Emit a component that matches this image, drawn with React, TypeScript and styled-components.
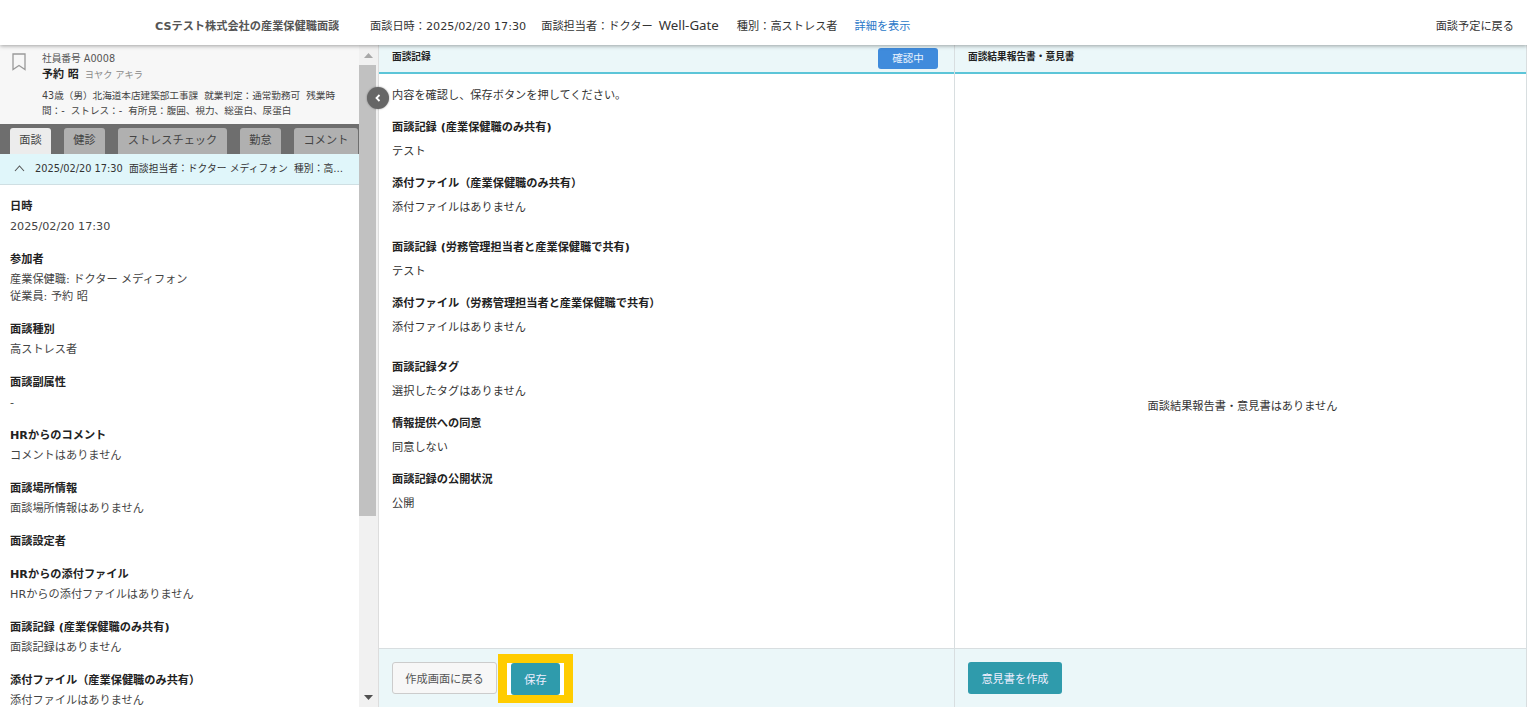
import styled, { createGlobalStyle } from "styled-components";

const GlobalStyle = createGlobalStyle`
  html, body {
    margin: 0;
    height: 100%;
    overflow: hidden;
    background: #fff;
    font-family: "DejaVu Sans", "Noto Sans CJK JP", sans-serif;
    font-size: 11.2px;
    color: #333;
  }
  #root { height: 100%; }
  * { box-sizing: border-box; }
`;

const Page = styled.div`
  display: flex;
  flex-direction: column;
  height: 707px;
  width: 1527px;
  overflow: hidden;
`;

const TopBar = styled.header`
  height: 45px;
  flex: none;
  display: flex;
  align-items: center;
  padding: 4px 13px 0 155px;
  background: #fff;
  box-shadow: 0 1px 4px rgba(0, 0, 0, 0.35);
  position: relative;
  z-index: 2;
`;

const CompanyTitle = styled.div`
  font-weight: 700;
  color: #555;
  width: 215px;
  white-space: nowrap;
`;

const TopInfo = styled.span<{ $gap?: number }>`
  margin-right: ${(p) => p.$gap ?? 15}px;
  color: #333;
  white-space: nowrap;
`;

const BrandName = styled.span`
  font-family: "Noto Sans", sans-serif;
  font-size: 13.3px;
  margin-left: 6px;
`;

const TopLink = styled.a`
  color: #2a78c8;
  white-space: nowrap;
`;

const BackLink = styled.a`
  margin-left: auto;
  color: #333;
  white-space: nowrap;
`;

const Body = styled.div`
  flex: 1;
  min-height: 0;
  display: flex;
  position: relative;
`;

const LeftPanel = styled.aside`
  width: 359px;
  flex: none;
  display: flex;
  flex-direction: column;
  overflow: hidden;
`;

const Profile = styled.section`
  height: 79px;
  flex: none;
  background: #f7f7f7;
  display: flex;
  padding: 7px 22px 0 12px;
`;

const BookmarkSlot = styled.div`
  width: 30px;
  flex: none;
  padding-top: 1px;
  color: #9a9a9a;
`;

const ProfileText = styled.div`
  flex: 1;
  min-width: 0;
`;

const EmployeeNo = styled.div`
  font-size: 9.7px;
  line-height: 14px;
  color: #555;
`;

const NameRow = styled.div`
  display: flex;
  align-items: baseline;
  gap: 6px;
  height: 18px;
  line-height: 18px;
  margin-bottom: 4px;
`;

const Name = styled.span`
  font-size: 11px;
  font-weight: 700;
  color: #222;
`;

const Kana = styled.span`
  font-size: 9.2px;
  color: #888;
`;

const ProfileMeta = styled.div`
  font-size: 9.6px;
  line-height: 15px;
  color: #444;
`;

const TabBand = styled.nav`
  height: 30px;
  flex: none;
  background: #6e6e6e;
  display: flex;
  align-items: flex-end;
  gap: 13px;
  padding-left: 10px;
`;

const Tab = styled.div<{ $active?: boolean; $width: number }>`
  width: ${(p) => p.$width}px;
  height: 26px;
  border-radius: 3px 3px 0 0;
  background: ${(p) => (p.$active ? "#ececec" : "#b0b0b0")};
  color: #444;
  text-align: center;
  line-height: 26px;
  white-space: nowrap;
`;

const SummaryBar = styled.div`
  height: 31px;
  flex: none;
  display: flex;
  align-items: center;
  gap: 10px;
  padding: 0 12px 2px 14px;
  background: #e0f6fa;
  border-bottom: 1px solid #cfdfe3;
  font-size: 9.8px;
  color: #333;
`;

const SummaryText = styled.span`
  flex: 1;
  min-width: 0;
  overflow: hidden;
  white-space: nowrap;
  text-overflow: ellipsis;
`;

const DetailList = styled.div`
  flex: 1;
  min-height: 0;
  overflow: hidden;
  padding: 13px 10px 0;
`;

const DetailItem = styled.div`
  margin-bottom: 16px;
`;

const Label = styled.div`
  font-weight: 700;
  color: #222;
  line-height: 17px;
  margin-bottom: 3px;
`;

const Value = styled.div`
  color: #444;
  line-height: 17px;
`;

const Scrollbar = styled.div`
  width: 20px;
  flex: none;
  display: flex;
  flex-direction: column;
  align-items: center;
  background: #f1f1f1;
  border-right: 1px solid #ddd;
`;

const ScrollButton = styled.div`
  height: 20px;
  flex: none;
  width: 100%;
  display: flex;
  align-items: center;
  justify-content: center;
`;

const ScrollThumb = styled.div`
  width: 17px;
  height: 451px;
  flex: none;
  background: #c1c1c1;
  margin-left: -2px;
`;

const ScrollSpacer = styled.div`
  flex: 1;
`;

const CollapseToggle = styled.button`
  position: absolute;
  left: 367px;
  top: 42px;
  width: 22px;
  height: 22px;
  padding: 0;
  border: none;
  border-radius: 50%;
  background: #666;
  box-shadow: 0 0 2px rgba(0, 0, 0, 0.4);
  display: flex;
  align-items: center;
  justify-content: center;
  z-index: 3;
`;

const Column = styled.section<{ $width: number }>`
  width: ${(p) => p.$width}px;
  flex: none;
  display: flex;
  flex-direction: column;
  border-right: 1px solid #d8dee0;
`;

const ColumnHeader = styled.div`
  height: 29px;
  flex: none;
  display: flex;
  justify-content: space-between;
  padding: 3px 16px 0 13px;
  background: #ebf7f9;
  border-bottom: 2px solid #5cc5d8;
`;

const ColumnTitle = styled.div`
  font-size: 9.7px;
  font-weight: 700;
  color: #222;
  line-height: 17px;
`;

const StatusBadge = styled.div`
  width: 60px;
  height: 21px;
  background: #3f8bdc;
  border-radius: 3px;
  color: #e8f2fc;
  font-size: 10.5px;
  line-height: 21px;
  text-align: center;
`;

const RecordBody = styled.div`
  flex: 1;
  min-height: 0;
  padding: 13px;
`;

const Notice = styled.p`
  margin: 0 0 15px;
  line-height: 17px;
  color: #333;
`;

const RecordItem = styled.div<{ $after?: number }>`
  margin-bottom: ${(p) => p.$after ?? 15}px;
`;

const RecordLabel = styled.div`
  font-weight: 700;
  color: #222;
  line-height: 17px;
  margin-bottom: 7px;
`;

const RecordValue = styled.div`
  color: #333;
  line-height: 17px;
`;

const EmptyBody = styled.div`
  flex: 1;
  min-height: 0;
  display: flex;
  align-items: center;
  justify-content: center;
  padding: 87px 0 0 4px;
  color: #333;
`;

const ColumnFooter = styled.div`
  height: 59px;
  flex: none;
  display: flex;
  align-items: center;
  gap: 1px;
  padding: 0 13px;
  background: #ebf7f9;
  border-top: 1px solid #d8dee0;
`;

const GhostButton = styled.button`
  width: 105px;
  height: 32px;
  background: #f7f7f7;
  border: 1px solid #ccc;
  border-radius: 3px;
  color: #555;
  font: inherit;
`;

const PrimaryButton = styled.button<{ $width: number }>`
  width: ${(p) => p.$width}px;
  height: 32px;
  background: #2f9bac;
  border: none;
  border-radius: 3px;
  color: #eef;
  font: inherit;
`;

const Highlight = styled.div`
  display: flex;
  border: solid #ffcc00;
  border-width: 9px 9px 8px;
  padding: 0 4px;
  background: #fff;
`;

const details: { label: string; values: string[] }[] = [
  { label: "日時", values: ["2025/02/20 17:30"] },
  { label: "参加者", values: ["産業保健職: ドクター メディフォン", "従業員: 予約 昭"] },
  { label: "面談種別", values: ["高ストレス者"] },
  { label: "面談副属性", values: ["-"] },
  { label: "HRからのコメント", values: ["コメントはありません"] },
  { label: "面談場所情報", values: ["面談場所情報はありません"] },
  { label: "面談設定者", values: [] },
  { label: "HRからの添付ファイル", values: ["HRからの添付ファイルはありません"] },
  { label: "面談記録 (産業保健職のみ共有)", values: ["面談記録はありません"] },
  { label: "添付ファイル（産業保健職のみ共有）", values: ["添付ファイルはありません"] },
];

const records: { label: string; value: string; after?: number }[] = [
  { label: "面談記録 (産業保健職のみ共有)", value: "テスト" },
  { label: "添付ファイル（産業保健職のみ共有）", value: "添付ファイルはありません", after: 23 },
  { label: "面談記録 (労務管理担当者と産業保健職で共有)", value: "テスト" },
  { label: "添付ファイル（労務管理担当者と産業保健職で共有）", value: "添付ファイルはありません", after: 23 },
  { label: "面談記録タグ", value: "選択したタグはありません" },
  { label: "情報提供への同意", value: "同意しない" },
  { label: "面談記録の公開状況", value: "公開" },
];

const tabs = [
  { name: "面談", width: 41, active: true },
  { name: "健診", width: 41 },
  { name: "ストレスチェック", width: 109 },
  { name: "勤怠", width: 41 },
  { name: "コメント", width: 64 },
];

export default function App() {
  return (
    <Page>
      <GlobalStyle />
      <TopBar>
        <CompanyTitle>CSテスト株式会社の産業保健職面談</CompanyTitle>
        <TopInfo>面談日時：2025/02/20 17:30</TopInfo>
        <TopInfo $gap={18}>
          面談担当者：ドクター<BrandName>Well-Gate</BrandName>
        </TopInfo>
        <TopInfo $gap={17}>種別：高ストレス者</TopInfo>
        <TopLink>詳細を表示</TopLink>
        <BackLink>面談予定に戻る</BackLink>
      </TopBar>
      <Body>
        <LeftPanel>
          <Profile>
            <BookmarkSlot>
              <svg width="14" height="18" viewBox="0 0 14 18" fill="none" stroke="currentColor" strokeWidth="1.3">
                <path d="M1 1h12v15.5l-6-4-6 4z" />
              </svg>
            </BookmarkSlot>
            <ProfileText>
              <EmployeeNo>社員番号 A0008</EmployeeNo>
              <NameRow>
                <Name>予約 昭</Name>
                <Kana>ヨヤク アキラ</Kana>
              </NameRow>
              <ProfileMeta>
                43歳（男）北海道本店建築部工事課&nbsp; 就業判定：通常勤務可&nbsp; 残業時間：-&nbsp; ストレス：-&nbsp; 有所見：腹囲、視力、総蛋白、尿蛋白
              </ProfileMeta>
            </ProfileText>
          </Profile>
          <TabBand>
            {tabs.map((t) => (
              <Tab key={t.name} $active={t.active} $width={t.width}>
                {t.name}
              </Tab>
            ))}
          </TabBand>
          <SummaryBar>
            <svg width="11" height="7" viewBox="0 0 11 7" fill="none" stroke="#555" strokeWidth="1.1">
              <path d="M1 6l4.5-5 4.5 5" />
            </svg>
            <SummaryText>2025/02/20 17:30&nbsp; 面談担当者：ドクター メディフォン&nbsp; 種別：高ストレス者</SummaryText>
          </SummaryBar>
          <DetailList>
            {details.map((d) => (
              <DetailItem key={d.label}>
                <Label>{d.label}</Label>
                {d.values.map((v) => (
                  <Value key={v}>{v}</Value>
                ))}
              </DetailItem>
            ))}
          </DetailList>
        </LeftPanel>
        <Scrollbar>
          <ScrollButton>
            <svg width="9" height="5" viewBox="0 0 9 5" fill="#a8a8a8">
              <path d="M4.5 0L9 5H0z" />
            </svg>
          </ScrollButton>
          <ScrollThumb />
          <ScrollSpacer />
          <ScrollButton>
            <svg width="9" height="5" viewBox="0 0 9 5" fill="#505050">
              <path d="M0 0h9L4.5 5z" />
            </svg>
          </ScrollButton>
        </Scrollbar>
        <CollapseToggle aria-label="collapse">
          <svg width="6" height="8" viewBox="0 0 6 8" fill="none" stroke="#fff" strokeWidth="1.8">
            <path d="M4.5 1L1.5 4l3 3" />
          </svg>
        </CollapseToggle>
        <Column $width={576}>
          <ColumnHeader>
            <ColumnTitle>面談記録</ColumnTitle>
            <StatusBadge>確認中</StatusBadge>
          </ColumnHeader>
          <RecordBody>
            <Notice>内容を確認し、保存ボタンを押してください。</Notice>
            {records.map((r) => (
              <RecordItem key={r.label} $after={r.after}>
                <RecordLabel>{r.label}</RecordLabel>
                <RecordValue>{r.value}</RecordValue>
              </RecordItem>
            ))}
          </RecordBody>
          <ColumnFooter>
            <GhostButton>作成画面に戻る</GhostButton>
            <Highlight>
              <PrimaryButton $width={49}>保存</PrimaryButton>
            </Highlight>
          </ColumnFooter>
        </Column>
        <Column $width={572}>
          <ColumnHeader>
            <ColumnTitle>面談結果報告書・意見書</ColumnTitle>
          </ColumnHeader>
          <EmptyBody>面談結果報告書・意見書はありません</EmptyBody>
          <ColumnFooter>
            <PrimaryButton $width={94}>意見書を作成</PrimaryButton>
          </ColumnFooter>
        </Column>
      </Body>
    </Page>
  );
}
